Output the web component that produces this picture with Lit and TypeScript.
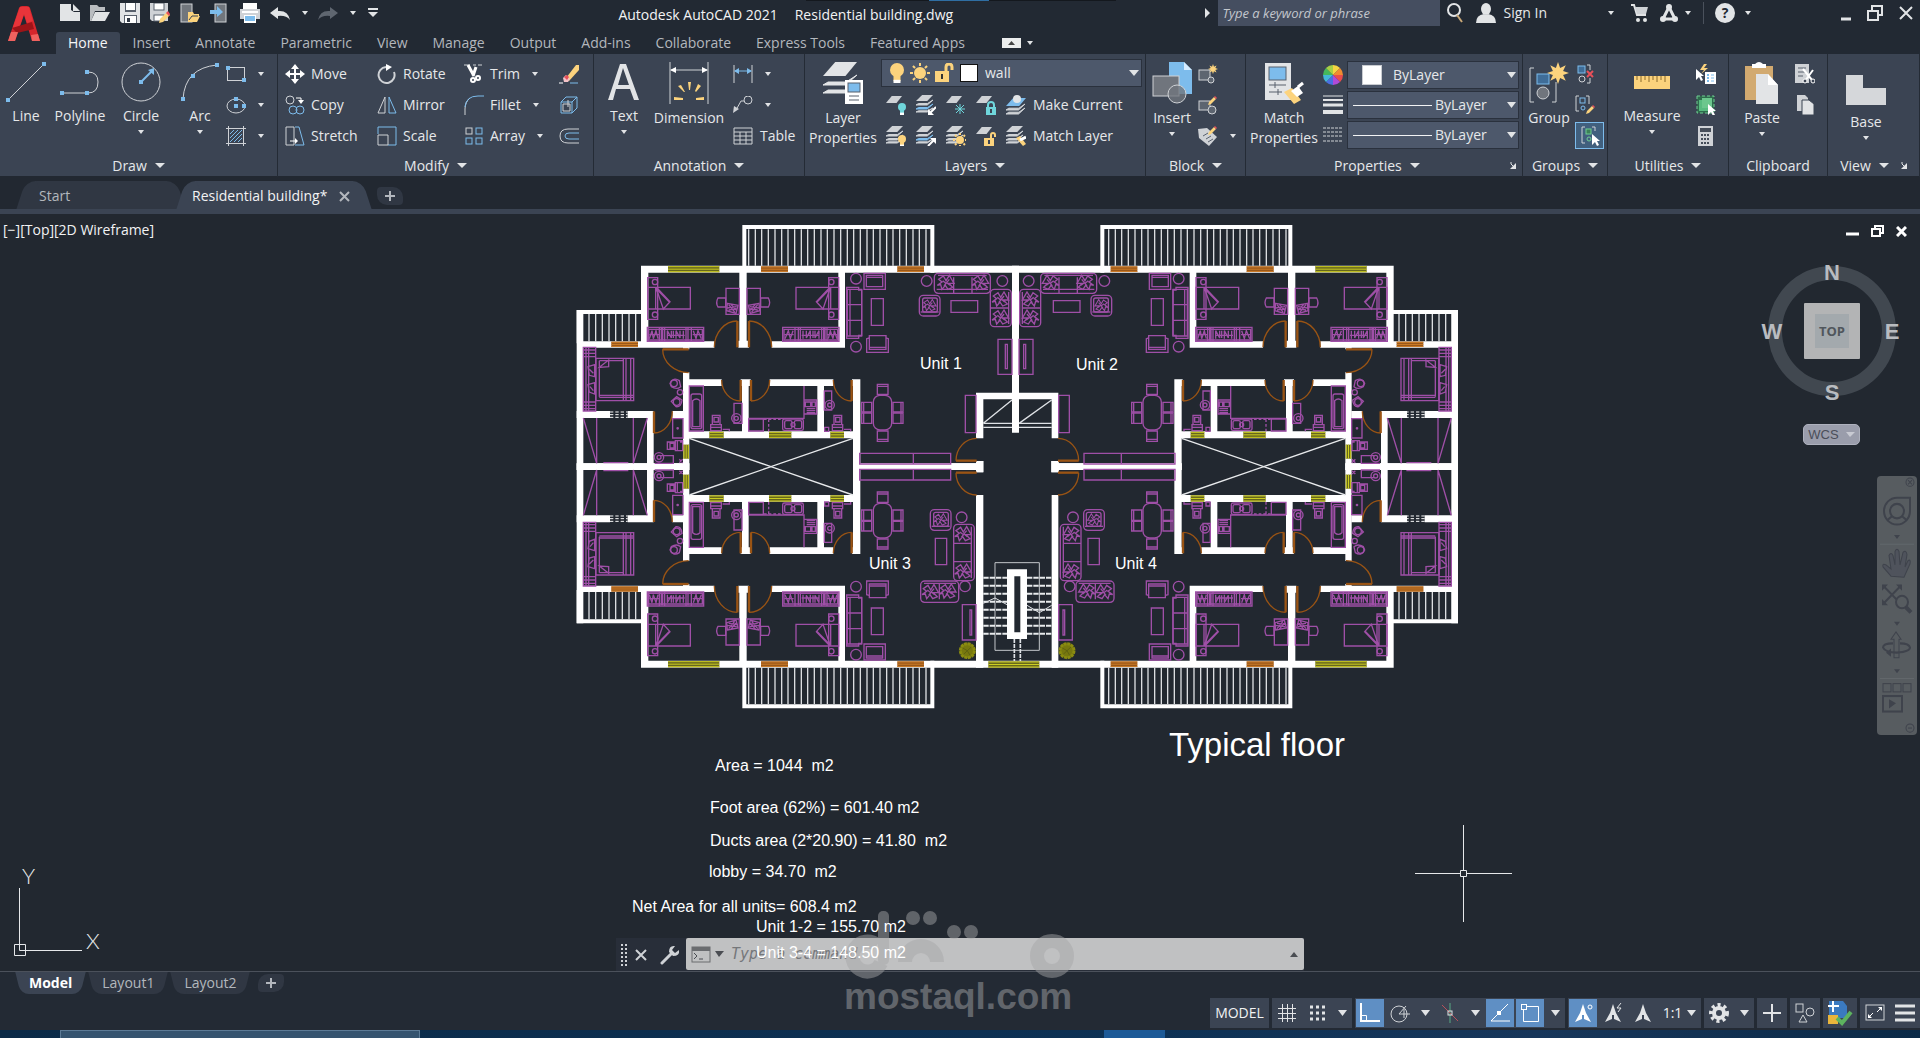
import { LitElement, html, svg, css, TemplateResult, SVGTemplateResult } from "lit";
import { customElement, state } from "lit/decorators.js";
import { classMap } from "lit/directives/class-map.js";

const W = "#e2e4e6";
const G = "#cfd2d6";
const B = "#7dbcec";
const Y = "#fcd37d";
const T = "#6fd6dc";
const R = "#e8505a";

const ico = (w: number, h: number, body: SVGTemplateResult) =>
  html`<svg class="ico" width=${w} height=${h} viewBox="0 0 ${w} ${h}" fill="none" aria-hidden="true">${body}</svg>`;

const caret = (w = 8, h = 5) => ico(w, h, svg`<path d="M0 0H${w}L${w / 2} ${h}Z" fill=${W}/>`);

const dot = (x: number, y: number) => svg`<rect x=${x - 2} y=${y - 2} width="4" height="4" fill=${B}/>`;
const sheet = (x: number, y: number, w: number, h: number, fill: string) =>
  svg`<path d="M${x + w * 0.36} ${y}H${x + w}L${x + w * 0.66} ${y + h}H${x}Z" fill=${fill}/>`;
const edge = (x: number, y: number, w: number, h: number, fill: string) =>
  svg`<path d="M${x} ${y + h}L${x + w * 0.15} ${y + h * 0.7}H${x + w * 0.68}L${x + w} ${y}L${x + w * 0.66} ${y + h}Z" fill=${fill} stroke=${fill}/>`;
const stack = (mid = G) => svg`${sheet(0, 0, 17, 6, G)}${edge(0, 5, 17, 5, G)}${edge(0, 9, 17, 5, mid)}${edge(0, 13, 17, 4, G)}`;
const pointer = (x: number, y: number) =>
  svg`<path d="M${x} ${y}L${x} ${y + 11}L${x + 3} ${y + 8}L${x + 5} ${y + 12}L${x + 7} ${y + 11}L${x + 5} ${y + 7}L${x + 8} ${y + 7}Z" fill="#fff"/>`;
const pencil = (x: number, y: number) =>
  svg`<path d="M${x} ${y + 9}L${x + 1} ${y + 6}L${x + 6} ${y + 1}L${x + 8} ${y + 3}L${x + 3} ${y + 8}Z" fill=${Y}/><path d="M${x + 6} ${y + 1}L${x + 7} ${y}L${x + 9} ${y + 2}L${x + 8} ${y + 3}Z" fill=${R}/>`;
const bulb = (x: number, y: number, c: string, r = 4) =>
  svg`<circle cx=${x} cy=${y} r=${r} fill=${c}/><path d="M${x - r * 0.5} ${y + r * 0.6}h${r}v${r}h${-r}z" fill=${c}/><path d="M${x - r * 0.5} ${y + r * 1.4}h${r}v${r * 0.6}h${-r}z" fill="#fff"/>`;
const sun = (x: number, y: number, r: number, o: number) => svg`<circle cx=${x} cy=${y} r=${r} fill=${Y}/>
  ${[0, 1, 2, 3, 4, 5, 6, 7].map((i) => {
    const a = (i * Math.PI) / 4;
    const c = Math.cos(a), s = Math.sin(a);
    return svg`<path d="M${x + c * (r + 1)} ${y + s * (r + 1)}L${x + c * o} ${y + s * o}" stroke=${Y} stroke-width="2"/>`;
  })}`;
const padlock = (x: number, y: number, c: string, open: boolean) =>
  svg`<rect x=${x} y=${y + 5} width="10" height="8" fill=${c}/><path d=${open ? `M${x + 7} ${y + 5}V${y + 2}q0 -2 2 -2t2 2v2` : `M${x + 2} ${y + 5}V${y + 3}q0 -3 3 -3t3 3v2`} stroke=${c} stroke-width="2"/><path d="M${x + 5} ${y + 7}v4" stroke="#3b4453" stroke-width="2"/>`;
const burst = (x: number, y: number, r: number) => {
  let d = "";
  for (let i = 0; i < 16; i++) {
    const a = (i * Math.PI) / 8, q = i % 2 ? r * 0.5 : r;
    d += `${i ? "L" : "M"}${x + q * Math.cos(a)} ${y + q * Math.sin(a)}`;
  }
  return svg`<path d=${d + "Z"} fill=${Y}/>`;
};

const icons = {
  logo: ico(34, 38, svg`
    <path d="M1 36L12 3Q13 1 15 1H20Q22 1 23 3L33 36H25L17 10L8 36Z" fill="#d5262c"/>
    <path d="M13 2L22 2L26 16L20 18L17 9L11 26L6 22Z" fill="#e8343a"/>
    <path d="M5 23L25 17L27 24L10 28Z" fill="#9d1418"/><path d="M1 36L4 27L11 27L8 36ZM24 30L31 29L33 36H25Z" fill="#f0625f"/>`),
  neu: ico(20, 18, svg`<path d="M0 0H11V6L14 8H20V17H0Z" fill=${W}/><path d="M13 0L20 7H13Z" fill=${W}/>`),
  open: ico(20, 18, svg`<path d="M0 17V1H7L9 3H15V7H5L1 17Z" fill="#b9bcc0"/><path d="M5 8H20L15 17H1Z" fill=${W}/>`),
  save: ico(20, 20, svg`<path d="M0 0H20V20H2L0 18Z" fill=${W}/><rect x="5" y="0" width="11" height="9" fill="#59616d"/><rect x="6" width="9" height="7" fill="#fff"/><rect x="4" y="12" width="13" height="8" fill="#59616d"/><rect x="5" y="13" width="11" height="7" fill="#fff"/><rect x="7" y="15" width="3" height="4" fill="#333b47"/>`),
  saveAs: ico(20, 20, svg`<path d="M0 0H18V18H2L0 16Z" fill=${G}/><rect x="4" width="10" height="7" fill="#fff" stroke="#59616d"/><rect x="4" y="12" width="10" height="6" fill="#fff" stroke="#59616d"/><path d="M9 20L10 16L17 9L20 12L13 19Z" fill=${Y}/><path d="M16 10L18 8L20 11L19 13Z" fill=${R}/>`),
  mobOpen: ico(20, 20, svg`<rect x="1" y="1" width="11" height="18" fill="#71767d" stroke=${G}/><path d="M8 19V9H13L14 11H19V13L20 13L17 19Z" fill=${Y}/><path d="M9 17L12 13H18" stroke="#3b4453"/>`),
  mobSave: ico(20, 20, svg`<rect x="5" y="1" width="11" height="18" fill="#71767d" stroke=${G}/><path d="M0 7H7V3L13 9L7 14V11H0Z" fill=${B}/>`),
  print: ico(20, 20, svg`<rect x="3" width="14" height="6" fill="#fff"/><rect y="6" width="20" height="10" fill=${G}/><rect x="2" y="8" width="16" height="2" fill="#fff"/><rect x="4" y="12" width="12" height="8" fill="#fff"/><rect x="5" y="13" width="10" height="5" fill=${B}/>`),
  undo: ico(20, 13, svg`<path d="M0 6L8 0V4Q18 3 20 13Q16 8 8 9V12Z" fill=${W}/>`),
  redo: ico(20, 13, svg`<path d="M20 6L12 0V4Q2 3 0 13Q4 8 12 9V12Z" fill="#5f6670"/>`),
  qat: ico(10, 10, svg`<path d="M0 1H10" stroke=${W} stroke-width="2"/><path d="M0 4H10L5 9Z" fill=${W}/>`),
  search: ico(16, 20, svg`<circle cx="7" cy="7" r="6" stroke=${W} stroke-width="2"/><path d="M10 12L15 19" stroke="#c9a878" stroke-width="2"/>`),
  person: ico(20, 20, svg`<ellipse cx="10" cy="6" rx="5" ry="6" fill=${W}/><path d="M0 20Q0 12 8 11L10 12L12 11Q20 12 20 20Z" fill=${W}/>`),
  cart: ico(17, 18, svg`<path d="M0 1H3L6 11H15" stroke=${W} stroke-width="2"/><path d="M4 3H17L15 10H6Z" fill=${G}/><circle cx="7" cy="16" r="2" fill=${W}/><circle cx="14" cy="16" r="2" fill=${W}/>`),
  appA: ico(18, 18, svg`<path d="M9 3L3 15H15Z" stroke=${W} stroke-width="3"/><circle cx="9" cy="3" r="3" fill=${W}/><circle cx="3" cy="15" r="3" fill=${W}/><circle cx="15" cy="15" r="3" fill=${W}/>`),
  line: ico(40, 40, svg`<path d="M3 37L37 3" stroke=${G}/>${dot(2, 38)}${dot(38, 2)}`),
  pline: ico(40, 40, svg`<path d="M2 31H28Q38 31 38 20Q38 10 28 10" stroke=${G}/>${dot(2, 31)}${dot(27, 31)}${dot(27, 10)}`),
  circle: ico(40, 40, svg`<circle cx="20" cy="20" r="19" stroke=${G}/><path d="M20 20L31 9" stroke=${B} stroke-width="2"/><path d="M33 6V13L27 8Z" fill=${B}/>${dot(20, 20)}`),
  arc: ico(40, 40, svg`<path d="M3 37Q5 6 37 3" stroke=${G}/>${dot(3, 37)}${dot(13, 14)}${dot(37, 3)}`),
  rect: ico(20, 18, svg`<rect x="1.5" y="2.5" width="17" height="13" stroke=${G}/>${dot(2, 3)}${dot(18, 15)}`),
  ellipse: ico(20, 18, svg`<ellipse cx="10" cy="10" rx="9" ry="7" stroke=${G}/>${dot(10, 3)}${dot(18, 10)}${dot(10, 10)}`),
  hatch: ico(20, 20, svg`<path d="M2.500 0V20M17.500 0V20M0 2.500H20M0 17.500H20" stroke=${G}/><path d="M4 8L8 4M4 12L12 4M4 16L16 4M8 16L16 8M12 16L16 12" stroke=${B}/>`),
  move: ico(20, 20, svg`<path d="M10 2V18M2 10H18" stroke="#fff" stroke-width="2"/><path d="M10 0L14 5H6ZM10 20L14 15H6ZM0 10L5 6V14ZM20 10L15 6V14Z" fill="#fff"/>`),
  copy: ico(20, 20, svg`<circle cx="5" cy="5" r="4" stroke=${G}/><circle cx="8" cy="15" r="4" stroke=${B}/><circle cx="15" cy="15" r="4" stroke=${B}/><path d="M11 3H16V6" stroke="#fff"/><path d="M13 5H19L16 9Z" fill="#fff"/>`),
  stretch: ico(20, 20, svg`<path d="M1 1H9V19H1Z" stroke=${G}/><path d="M10 1H14L19 19H10" stroke=${B}/><path d="M5 15H11" stroke="#fff"/><path d="M10 12V18L13 15Z" fill="#fff"/>`),
  rotate: ico(20, 20, svg`<path d="M9 3A8 8 0 1 0 17 8" stroke=${G} stroke-width="2"/><path d="M9 0L15 3L9 7Z" fill="#fff"/>`),
  mirror: ico(20, 20, svg`<path d="M8 2V18H1Z" stroke=${G}/><path d="M12 2V18H19Z" stroke=${B}/>`),
  scale: ico(20, 20, svg`<path d="M1 8V1H19V19H11" stroke=${B}/><path d="M1 9H11V19H1Z" stroke=${G}/>`),
  trim: ico(20, 20, svg`<path d="M0 1H6M9 1H12M14 1H18" stroke=${G}/><path d="M4 1L10 12M12 3L9 12" stroke="#fff" stroke-width="3"/><circle cx="9" cy="16" r="2" stroke="#fff" stroke-width="2"/><circle cx="14" cy="14" r="2" stroke="#fff" stroke-width="2"/>`),
  fillet: ico(20, 20, svg`<path d="M1 20V14Q1 7 6 3" stroke=${G}/><path d="M1 12Q2 1 14 1H20" stroke=${B}/>`),
  array: ico(20, 20, svg`<rect x="2" y="2" width="6" height="6" stroke=${G}/><rect x="12" y="2" width="6" height="6" stroke=${B}/><rect x="2" y="12" width="6" height="6" stroke=${B}/><rect x="12" y="12" width="6" height="6" stroke=${B}/>`),
  erase: ico(20, 20, svg`<path d="M7 14L17 1H20V6L10 17Z" fill=${Y}/><path d="M4 14L7 11L11 15L9 18H5Z" fill="#f3c3c8"/><path d="M5 13L8 11L10 13L8 16Z" fill=${R}/><path d="M0 19H4" stroke="#fff"/><path d="M11 19H19" stroke=${B}/>`),
  explode: ico(20, 20, svg`<path d="M2 7H13V18H2ZM2 7L7 2H18L13 7M18 2V13L13 18" stroke=${B}/><path d="M4 9H11V16H4ZM9 5V12" stroke=${G}/>`),
  offset: ico(20, 16, svg`<path d="M20 1H9Q1 1 1 8T9 15H20" stroke=${G}/><path d="M20 5H10Q6 5 6 8T10 11H20" stroke=${B}/>`),
  text: ico(36, 40, svg`<path d="M2 38L14 2H20L33 38H28L24 27H10L7 38ZM12 23H23L17 6Z" fill=${W} fill-rule="evenodd"/>`),
  dim: ico(40, 42, svg`<path d="M1 0V42M39 0V42M2 8H38" stroke=${G}/><path d="M1 8L7 5V11ZM39 8L33 5V11Z" fill="#fff"/><path d="M19 20h3l-1 8h-1zM9 24l3-1l4 7h-1zM29 22l3 2l-5 6l-1-1zM5 35l9 1v2H5zM35 35v3h-8v-2z" fill=${Y}/>`),
  dimLin: ico(20, 18, svg`<path d="M1 0V18M19 0V18" stroke=${G}/><path d="M2 6H18" stroke=${B}/><path d="M1 6L6 3V9ZM19 6L14 3V9Z" fill=${B}/>`),
  leader: ico(20, 18, svg`<circle cx="15" cy="4" r="4" stroke=${G}/><path d="M11 5H8L3 14" stroke=${G}/><path d="M0 17L1 10L6 13Z" fill=${G}/>`),
  table: ico(20, 18, svg`<path d="M1 1H19V17H1ZM1 5H19M1 9H19M1 13H19M7 5V17M13 5V17" stroke=${G}/>`),
  layerProps: ico(40, 42, svg`${sheet(0, 0, 34, 14, W)}${edge(0, 13, 34, 10, W)}${edge(0, 21, 34, 10, W)}<rect x="22" y="18" width="18" height="24" fill="#fff"/><rect x="25" y="21" width="12" height="9" fill=${B} stroke="#59616d"/><path d="M26 34H36M26 38H36" stroke="#59616d"/>`),
  bulb: ico(16, 20, svg`${bulb(8, 7, Y, 7)}`),
  sun: ico(20, 20, sun(10, 10, 6, 10)),
  lock: ico(20, 20, svg`<rect y="8" width="14" height="11" fill=${Y}/><path d="M11 8V4Q11 1 14 1T17 4V7" stroke=${Y} stroke-width="3"/><path d="M7 11V16" stroke="#333" stroke-width="2"/>`),
  lOff: ico(20, 20, svg`${sheet(0, 1, 16, 7, G)}${bulb(16, 12, T, 4)}`),
  lIso: ico(20, 20, svg`${stack(B)}<path d="M20 12L14 18" stroke="#fff" stroke-width="2"/><path d="M12 20V14L18 20Z" fill="#fff"/>`),
  lFrz: ico(20, 20, svg`${sheet(0, 1, 16, 7, G)}<path d="M14 9V19M9 14H19M10 10L18 18M18 10L10 18" stroke=${T} stroke-width="1"/>`),
  lLock: ico(20, 20, svg`${sheet(0, 1, 16, 7, G)}${padlock(10, 7, T, false)}`),
  lCur: ico(20, 20, svg`${sheet(0, 3, 20, 8, B)}${edge(0, 9, 19, 6, G)}${edge(0, 13, 19, 6, G)}<circle cx="11" cy="4" r="4" fill=${W}/>`),
  lOn: ico(20, 20, svg`${stack()}${bulb(16, 13, Y, 4)}`),
  lUniso: ico(20, 20, svg`${stack(B)}<path d="M12 20L18 14" stroke="#fff" stroke-width="2"/><path d="M20 12V18L14 12Z" fill="#fff"/>`),
  lThaw: ico(20, 20, svg`${stack()}${sun(14, 14, 4, 7)}`),
  lUnlock: ico(20, 20, svg`${sheet(0, 1, 16, 7, G)}${padlock(8, 7, Y, true)}`),
  lMatch: ico(20, 20, svg`${stack()}<path d="M10 12L14 10L20 18L17 20Z" fill=${Y}/><path d="M14 14L20 11" stroke="#fff" stroke-width="3"/>`),
  insert: ico(40, 42, svg`<path d="M17 0H32L40 8V32H17Z" fill=${B}/><path d="M32 0V8H40Z" fill="#d6ecff"/><rect x="1" y="14" width="26" height="20" fill="#70757d" stroke=${G}/><circle cx="25" cy="32" r="9" fill="#70757d" fill-opacity=".8" stroke=${G}/>`),
  bNew: ico(20, 20, svg`<rect x="1" y="6" width="11" height="10" fill="#5d6570" stroke=${G}/><circle cx="13" cy="16" r="3" fill="#5d6570" stroke=${G}/>${burst(15, 5, 5)}`),
  bEdit: ico(20, 20, svg`<rect x="1" y="6" width="11" height="9" fill="#5d6570" stroke=${G}/><circle cx="14" cy="15" r="4" fill="#5d6570" stroke=${G}/>${pencil(10, 1)}`),
  bAttr: ico(20, 20, svg`<path d="M0 3L9 2L19 11L11 20L1 12Z" fill=${G}/><path d="M5 10L10 7M8 13L13 10M10 16L15 13" stroke="#59616d"/>${pencil(10, 0)}`),
  match: ico(40, 42, svg`<rect x="1" y="1" width="26" height="37" fill=${W}/><rect x="5" y="5" width="17" height="13" fill=${B} stroke="#59616d"/><path d="M5 23H22M5 30H18M11 20V26M14 27V33" stroke="#59616d"/><path d="M20 30L28 26L37 38L30 42Z" fill=${Y}/><path d="M27 29L34 24L39 31L33 35Z" fill="#fff"/><path d="M34 25L39 21" stroke="#fff" stroke-width="3"/>`),
  wheel: ico(20, 20, svg`${["#f5d442", "#f28b30", "#ea4c4c", "#b14ad8", "#4a6fe0", "#43b8d8", "#45b95c", "#a6cf45"].map((c, i) => {
    const a = (i * Math.PI) / 4, b = ((i + 1) * Math.PI) / 4;
    return svg`<path d="M10 10L${10 + 10 * Math.sin(a)} ${10 - 10 * Math.cos(a)}A10 10 0 0 1 ${10 + 10 * Math.sin(b)} ${10 - 10 * Math.cos(b)}Z" fill=${c}/>`;
  })}`),
  weights: ico(20, 20, svg`<path d="M0 1H20" stroke=${W}/><path d="M0 5H20" stroke=${W} stroke-width="2"/><path d="M0 10H20" stroke=${W} stroke-width="3"/><path d="M0 17H20" stroke=${W} stroke-width="4"/>`),
  ltypes: ico(20, 16, svg`<path d="M0 1H20M0 5H20M0 9H20M0 14H20" stroke=${G} stroke-dasharray="3 1"/>`),
  group: ico(40, 42, svg`<path d="M5 6H1V40H5M23 40H27V20" stroke=${G}/><rect x="8" y="12" width="12" height="10" fill="#3f6d98" stroke=${B}/><circle cx="14" cy="31" r="6" fill="#70757d" stroke=${G}/>${burst(29, 11, 11)}`),
  ungroup: ico(20, 20, svg`<rect x="3" y="2" width="7" height="7" fill="#3f6d98" stroke=${B}/><circle cx="7" cy="15" r="3" stroke=${G}/><path d="M12 1H15V6M12 19H15V14" stroke=${G}/><path d="M12 7L18 13M18 7L12 13" stroke=${R} stroke-width="2"/>`),
  gEdit: ico(20, 20, svg`<path d="M4 1H1V16H4M11 1H14V9" stroke=${G}/><rect x="5" y="3" width="5" height="5" stroke=${B}/><circle cx="8" cy="13" r="2" stroke=${B}/>${pencil(11, 10)}`),
  gSel: ico(20, 20, svg`<path d="M5 1H2V17H5M12 1H15V5" stroke=${G}/><rect x="6" y="3" width="5" height="5" fill="#3c8058" stroke="#6fce92"/><circle cx="9" cy="13" r="2" stroke="#6fce92"/>${pointer(12, 8)}`),
  measure: ico(36, 40, svg`<rect y="14" width="36" height="13" fill=${Y}/><path d="M3 14V18M7 14V20M11 14V18M15 14V20M19 14V18M23 14V20M27 14V18M31 14V20" stroke="#8a6a2c"/>`),
  qsel: ico(20, 20, svg`<path d="M8 0L4 6H8L5 10L12 4H8L11 0Z" fill=${Y}/><rect x="9" y="8" width="11" height="12" fill="#fff"/><path d="M11 11H13M11 14H13M11 17H13" stroke=${B} stroke-width="2"/><path d="M15 11H18M15 14H18M15 17H18" stroke=${B}/>${pointer(0, 5)}`),
  selAll: ico(20, 20, svg`<rect x="1" y="1" width="17" height="17" fill="#2e6b4c" stroke="#6fce92" stroke-dasharray="3 2"/><rect x="3" y="5" width="10" height="11" fill="#58bb7f"/><rect x="6" y="3" width="10" height="10" fill="#6cc78d"/>${pointer(12, 9)}`),
  calc: ico(20, 20, svg`<rect x="2" width="15" height="20" fill=${G}/><rect x="4" y="2" width="11" height="4" fill="#454d59"/><path d="M5 9H14M5 13H14M5 17H14" stroke="#454d59" stroke-width="2" stroke-dasharray="2 1"/>`),
  paste: ico(34, 42, svg`<rect y="4" width="28" height="34" fill="#d2aa70"/><path d="M7 6V2H10Q14 -2 18 2H21V6Z" fill="#fff"/><path d="M11 12H23L33 23V42H11Z" fill=${W}/><path d="M23 12V23H33Z" fill="#fff"/>`),
  cut: ico(20, 20, svg`<path d="M0 0H14V19H0Z" fill=${G}/><path d="M3 4H11M3 8H11M3 12H8" stroke="#59616d"/><path d="M8 5L17 16M18 6L10 17" stroke="#fff" stroke-width="2"/><circle cx="10" cy="17" r="2" fill="#3b4453" stroke="#fff"/><circle cx="18" cy="17" r="2" fill="#3b4453" stroke="#fff"/>`),
  copyClip: ico(20, 20, svg`<path d="M2 0H10L13 3V16H2Z" fill=${G}/><path d="M7 5H14L19 9V20H7Z" fill=${W} stroke="#3b4453"/>`),
  base: ico(40, 46, svg`<path d="M0 13H17V26H40V43H0Z" fill="#d5d7da"/>`),
  launch: ico(6, 7, svg`<path d="M0 1H2M1 2L4 5" stroke=${W}/><path d="M6 1V7H0Z" fill=${W}/>`),
};

/* ---------- Floor plan: drawn at three units to the pixel ---------- */
const P = "#9f4fa7";
const O = "#9a5414";
const r = (x: number, y: number, x2: number, y2: number) => svg`<path d="M${x} ${y}H${x2}V${y2}H${x}Z"/>`;
const c = (x: number, y: number, rad: number) => svg`<circle cx=${x} cy=${y} r=${rad}/>`;
const door = (hx: number, hy: number, tx: number, ty: number, ex: number, ey: number) => {
  const sweep = (tx - hx) * (ey - hy) - (ty - hy) * (ex - hx) > 0 ? 1 : 0;
  const rx = Math.abs(tx - hx) + Math.abs(ex - hx), ry = Math.abs(ty - hy) + Math.abs(ey - hy);
  return svg`<path d="M${hx} ${hy}L${tx} ${ty}" stroke-width="7"/><path d="M${tx} ${ty}A${rx} ${ry} 0 0 ${sweep} ${ex} ${ey}"/>`;
};
const bars = (x0: number, x1: number, y0: number, y1: number, step: number) => {
  let d = "";
  for (let x = x0; x < x1; x += step) d += `M${Math.round(x)} ${y0}V${y1}`;
  return svg`<path d=${d} stroke="#dcdee1" stroke-width="4"/>`;
};
const pane = (x: number, y: number, x2: number, y2: number, col: string, back: string) => {
  const flat = x2 - x > y2 - y;
  const m = flat ? (y + y2) / 2 : (x + x2) / 2;
  const d = flat
    ? `M${x} ${y + 2}H${x2}M${x} ${m}H${x2}M${x} ${y2 - 2}H${x2}`
    : `M${x + 2} ${y}V${y2}M${m} ${y}V${y2}M${x2 - 2} ${y}V${y2}`;
  return svg`<rect x=${x} y=${y} width=${x2 - x} height=${y2 - y} fill=${back}/><path d=${d} stroke=${col} stroke-width="3"/>`;
};
const yel = (x: number, y: number, x2: number, y2: number) => pane(x, y, x2, y2, "#cfcf22", "#66671d");
const ora = (x: number, y: number, x2: number, y2: number) => pane(x, y, x2, y2, "#d5822a", "#8f5016");
const leaf = (x: number, y: number, s = 1) =>
  svg`<path transform="translate(${x} ${y}) scale(${s})" d="M-22 -10L-8 -20L0 -6L10 -22L18 -8L24 2L8 2L20 14L6 20L-2 8L-12 20L-16 6L-26 8L-12 -2ZM-10 -6L0 2L10 -10M-6 10L2 0L12 8"/>`;
const armchair = (x: number, y: number) =>
  svg`<rect x=${x} y=${y} width="62" height="62" rx="12"/><rect x=${x + 10} y=${y + 8} width="44" height="42" rx="6"/><path d="M${x + 4} ${y + 50}H${x + 58}"/>${leaf(x + 31, y + 30, 0.8)}`;

const suite = () => svg`
  ${r(263, 203, 293, 328)}${r(263, 232, 391, 297)}<path d="M287 232V297M289 232L330 275L310 297L289 236L330 278"/>${c(285, 216, 8)}${c(285, 314, 8)}
  ${r(498, 235, 538, 313)}<path d="M497 264H474Q466 278 474 291H497Z"/><path d="M502 280L534 286L528 310L500 302ZM506 284L524 306M512 282L530 302M502 294L530 290M506 300L534 296"/>
  ${r(262, 352, 431, 394)}${r(266, 358, 427, 390)}<path d="M298 352V394M314 352V394M378 352V394M394 352V394M304 354V392M308 354V392M384 354V392M268 386L276 362L280 386L288 362L294 386M322 386V362L334 384V362M340 384V362M348 386V362L360 384V362M370 386V362M400 362L408 386L414 362L424 386M268 374H296M320 376H374M398 374H426"/>`;

const walls = () => svg`
  <path d="M553 188V51H1117V188" stroke="#fff" stroke-width="12"/>
  <path d="M56 400V306H248" stroke="#fff" stroke-width="12"/>
  ${bars(566, 1110, 58, 167, 19.7)}${bars(67, 243, 312, 394, 20)}
  <g fill="#fff">
    <path d="M243 167H1372V188H243ZM243 167H265V412H243ZM50 300H70V770H50ZM50 394H463V413H50ZM538 167H560V413H538ZM535 392H567V413H535ZM635 394H855V413H635ZM835 188H855V413H835Z"/>
    <path d="M369 487H388V770H369ZM388 508H485V528H388ZM542 508H572V528H542ZM546 508H566V664H546ZM629 508H820V528H629ZM772 508H792V664H772ZM876 508H901V528H876ZM879 508H901V770H879ZM369 664H901V685H369Z"/>
    <path d="M50 603H150V624H50ZM203 603H280V624H203ZM337 603H370V624H337ZM261 603H281V770H261ZM50 760H388V780H50ZM879 760H1270V780H879ZM1248 753H1270V787H1248ZM369 412H388V418H369Z"/>
  </g>
  <path d="M150 606H203M150 614H203M150 622H203" stroke="#fff" stroke-width="3" stroke-dasharray="10 6"/>
  <path d="M388 685L633 770L879 685" stroke="#e8eaec" stroke-width="4"/>
  ${yel(324, 168, 478, 187)}${yel(448, 665, 491, 684)}${yel(627, 665, 694, 684)}${yel(811, 665, 852, 684)}${yel(370, 704, 387, 746)}
  ${ora(603, 169, 684, 186)}${ora(1012, 169, 1092, 186)}${ora(154, 395, 234, 411)}`;

const fittings = () => svg`
  <g stroke=${P} stroke-width="4">
    ${suite()}<g transform="translate(1099 0) scale(-1 1)">${suite()}</g>
    ${r(70, 412, 107, 603)}<path d="M78 412V603M86 412V603M70 420H107M70 430H107M70 440H107M70 576H107M70 586H107M70 596H107M107 445V572M84 470L104 464V500L88 496ZM84 524L104 518V552L88 546ZM88 478L100 490M90 530L100 542"/>
    ${r(107, 445, 221, 572)}<path d="M118 452V560M118 452H190M118 556H221M118 562H221M190 445V572M198 445V572M212 445V572M118 472L146 450V470Z"/>
    <path d="M330 520Q340 500 358 512L362 530Q350 540 334 530ZM334 574L350 560L366 570Q364 592 348 590Z"/>${c(342, 520, 10)}${c(360, 547, 8)}${c(350, 576, 10)}
    <path d="M110 624V760M220 624V760M70 624L110 760M262 624L220 760M130 758H205"/>
    ${r(338, 626, 369, 684)}${c(353, 655, 2)}<path d="M322 696H346V718H322ZM330 700H342V714H330ZM346 692H368V722H346ZM352 692V722M360 696H368M358 748L368 758M358 758L368 748"/>
    <path d="M300 737H340V760H284"/>${c(297, 742, 14)}${c(297, 742, 6)}
    ${r(388, 528, 430, 663)}<rect x="393" y="552" width="32" height="104" rx="6"/><path d="M398 572Q409 562 420 572V650H398Z"/>
    ${r(522, 580, 546, 640)}${c(529, 625, 14)}${c(529, 625, 6)}
    <path d="M457 616H480V644H457ZM462 622H475V636H462ZM452 644H484V662H452ZM452 652H484M488 658H508V664"/>
    <path d="M732 528V625H566M566 627H610V663H566ZM732 570H770V612H732ZM736 576H752V590H736ZM740 596H766M740 602H766M740 608H766M756 576H766V590H756Z"/>
    <path d="M626 628V664M612 628H666" stroke-dasharray="8 6"/><rect x="668" y="627" width="62" height="34" rx="5"/><rect x="674" y="632" width="22" height="24" rx="5"/><rect x="703" y="632" width="22" height="24" rx="5"/>${c(699, 644, 6)}
    ${r(793, 543, 815, 600)}${c(809, 585, 14)}${c(809, 585, 6)}
    <path d="M822 616H845V644H822ZM827 622H840V636H827ZM817 644H848V662H817ZM817 652H848M852 658H872V664M794 652H806V664H794Z"/>
    <rect x="940" y="556" width="55" height="104" rx="20"/>${r(952, 523, 984, 553)}${r(952, 663, 984, 694)}${r(905, 577, 935, 606)}${r(905, 609, 935, 640)}${r(999, 577, 1029, 606)}${r(999, 609, 1029, 640)}<path d="M952 529H984M952 688H984M911 577V640M1023 577V640"/>
    ${r(899, 730, 1172, 762)}<path d="M1060 730V762"/>
    ${c(888, 206, 16)}${r(912, 190, 976, 238)}${r(919, 196, 968, 230)}<path d="M919 202H968M860 232H896V240H905V376H896V385H860Z"/>${r(862, 238, 905, 378)}<path d="M862 284H905M862 331H905M870 238V378"/>${r(934, 266, 970, 346)}
    ${r(928, 377, 978, 418)}<path d="M928 384L920 386V427H985V386L978 384M928 412H978"/>${c(888, 410, 16)}
  </g>
  <g stroke=${O} stroke-width="4">
    ${door(532, 412, 532, 333, 463, 412)}${door(567, 412, 567, 333, 635, 412)}${door(386, 418, 308, 418, 386, 488)}
    ${door(542, 510, 542, 573, 485, 510)}${door(573, 510, 573, 573, 629, 510)}${door(875, 510, 875, 573, 820, 510)}
    ${door(282, 604, 282, 669, 337, 604)}${door(1250, 752, 1188, 752, 1250, 685)}
  </g>`;

const loungeNorth = () => svg`
  ${c(1100, 213, 16)}${c(1327, 213, 16)}
  <rect x="1123" y="190" width="168" height="60" rx="12"/><path d="M1134 196H1280M1181 202V250M1236 202V250M1130 238H1284"/>${leaf(1158, 218)}${leaf(1262, 218)}
  ${armchair(1078, 256)}${r(1173, 272, 1253, 307)}
  <rect x="1291" y="238" width="63" height="112" rx="12"/><path d="M1346 246V342M1291 294H1346"/>${leaf(1322, 268)}${leaf(1322, 322)}
  ${r(1314, 388, 1356, 493)}${r(1336, 403, 1342, 476)}`;

const loungeSouth = () => svg`
  ${c(1205, 922, 16)}${c(1215, 1129, 16)}${armchair(1111, 899)}${r(1126, 985, 1160, 1064)}
  <rect x="1181" y="943" width="62" height="169" rx="12"/><path d="M1234 950V1104M1181 1000H1234M1181 1055H1234"/>${leaf(1210, 972)}${leaf(1210, 1084)}
  <rect x="1082" y="1113" width="114" height="64" rx="12"/><path d="M1092 1120H1188M1138 1120V1168"/>${leaf(1112, 1146)}${leaf(1164, 1144)}
  ${r(1207, 1184, 1248, 1290)}${r(1230, 1200, 1235, 1275)}${r(1216, 556, 1248, 668)}`;

const plant = (x: number, y: number) => svg`<circle cx=${x} cy=${y} r="22" fill="#77780f"/><circle cx=${x} cy=${y} r="21" stroke="#8b8c10" stroke-width="9" stroke-dasharray="9 2"/>
  <path d="M${x} ${y}l-14 -8M${x} ${y}l12 -11M${x} ${y}l8 14M${x} ${y}l-11 11" stroke="#55570f" stroke-width="2"/>`;

const quadrants = ["", "translate(2744 0) scale(-1 1)", "translate(0 1540) scale(1 -1)", "translate(2744 1540) scale(-1 -1)"];

const stairs = () => {
  let d = "";
  for (let i = 0; i < 8; i++) d += `M1270 ${1103 + i * 24}H1341M1401 ${1103 + i * 24}H1475`;
  return svg`
    <path d="M1305 1058H1438V1321H1305Z" stroke="#c4c7cb" stroke-width="3"/>
    <path d=${d} stroke="#e8eaec" stroke-width="6" stroke-dasharray="16 3"/>
    <path d="M1270 1180L1305 1164L1341 1184M1401 1186L1438 1208L1475 1186" stroke="#dfe2e6" stroke-width="3"/>
    <path d="M1341 1078H1401V1287H1341ZM1363 1099V1267H1381V1099Z" fill="#fff" fill-rule="evenodd"/>
    <path d="M1363 1287V1353M1381 1287V1353" stroke="#dfe2e6" stroke-width="5" stroke-dasharray="12 3"/>
    ${yel(1285, 1354, 1438, 1373)}`;
};

const plan = () => svg`
  <g transform="translate(560 -4) scale(.333333)">
    ${quadrants.map((t) => svg`<g transform=${t}>${walls()}</g>`)}
    <path d="M1248 548H1495V568H1248ZM1248 548H1270V685H1248ZM1475 548H1495V685H1475ZM1356 167H1377V668H1356ZM1248 855H1270V1373H1248ZM1475 855H1495V1373H1475Z" fill="#fff"/>
    <path d="M1270 640H1356M1377 640H1475M1270 652H1356M1377 652H1475M1270 640L1356 570M1377 640L1475 570" stroke="#dfe2e6" stroke-width="4"/>
    ${stairs()}
    ${quadrants.map((t) => svg`<g transform=${t}>${fittings()}</g>`)}
    <g stroke=${P} stroke-width="4">
      ${loungeNorth()}<g transform="translate(2733 0) scale(-1 1)">${loungeNorth()}</g>
      ${loungeSouth()}<g transform="translate(2744 0) scale(-1 1)">${loungeSouth()}</g>
    </g>
    ${plant(1222, 1322)}${plant(1521, 1322)}
  </g>`;

const notes: [number, number, string][] = [
  [715, 771, "Area = 1044\u00a0 m2"],
  [710, 813, "Foot area (62%) = 601.40 m2"],
  [710, 846, "Ducts area (2*20.90) = 41.80\u00a0 m2"],
  [709, 877, "lobby = 34.70\u00a0 m2"],
  [632, 912, "Net Area for all units= 608.4 m2"],
  [920, 369, "Unit 1"],
  [1076, 370, "Unit 2"],
  [869, 569, "Unit 3"],
  [1115, 569, "Unit 4"],
];

type Cmd = [string, TemplateResult, boolean?];

@customElement("app-root")
export class AppRoot extends LitElement {
  @state() private ribbonTab = "Home";
  @state() private layout = "Model";

  static styles = css`
    :host { display: flex; flex-direction: column; position: relative; height: 100vh; overflow: hidden; background: #222831; color: #e6e8ea; font: 14px/20px "Open Sans", "Noto Sans", sans-serif; }
    * { box-sizing: border-box; }
    button, select, input { font: inherit; color: inherit; background: none; border: 0; padding: 0; margin: 0; border-radius: 0; }
    button { display: flex; align-items: center; justify-content: center; white-space: nowrap; }
    .ico { display: block; flex: none; }
    header { display: grid; grid-template-columns: 56px 1fr; grid-template-rows: 28px 26px; flex: none; background: #222933; }
    .logo { grid-row: 1 / 3; padding: 0 8px 6px 0; }
    .titlebar { display: grid; grid-template-columns: minmax(0, 559fr) auto minmax(0, 961fr); align-items: center; }
    .qat { display: flex; align-items: center; gap: 10px; padding: 0 0 2px 4px; }
    .qat .arrow { margin-left: 2px; }
    .qat .more { margin-left: 2px; }
    .doc { display: flex; gap: 17px; padding-top: 2px; margin: 0; font-weight: 400; font-size: 14px; color: #f2f3f4; white-space: nowrap; }
    .tools { display: flex; align-items: center; align-self: stretch; justify-content: flex-end; padding: 0 7px 2px 0; }
    .search { width: 222px; height: 26px; align-self: flex-start; margin: 0 7px 0 8px; padding: 0 4px; background: #454e60; font-style: italic; font-size: 13px; }
    .search::placeholder { color: #c3c7cd; opacity: 1; }
    .sign { gap: 7px; margin: 0 61px 0 13px; }
    .cartbtn { margin: 0 12px 0 17px; }
    .tools .appbtn { gap: 7px; padding-right: 12px; border-right: 1px solid #4a515c; height: 22px; }
    .help { gap: 10px; margin: 0 90px 0 11px; }
    .q { width: 20px; height: 20px; border-radius: 10px; background: #e2e4e6; color: #222933; font-weight: 700; line-height: 20px; }
    .wins { display: flex; align-items: center; gap: 16px; }
    .menu { display: flex; align-items: stretch; gap: 1px; padding-top: 4px; color: #b3b7bd; }
    .menu button { padding: 0 12px; border-radius: 3px 3px 0 0; }
    .menu button.on { background: #3b4453; color: #f5f6f7; }
    .menu .mini { margin-left: 24px; padding: 0; gap: 6px; }
    .ribbon { display: grid; grid-template-columns: 278fr 316fr 211fr 341fr 100fr 277fr 85fr 121fr 99fr 92fr; height: 122px; flex: none; background: #3b4453; }
    .panel { display: flex; flex-direction: column; min-width: 0; border-right: 1px solid #242b35; }
    .body { display: flex; flex: 1; padding-top: 4px; min-height: 0; }
    .panel h2 { display: flex; align-items: center; justify-content: center; gap: 8px; height: 26px; margin: 0; padding-top: 3px; font-size: 14px; font-weight: 400; }
    .panel h2 .launch { margin-left: 4px; }
    .panel h2.wide { padding-left: 88px; justify-content: space-between; padding-right: 6px; }
    .panel h2.wide .name { display: flex; gap: 8px; align-items: center; }
    .big { flex-direction: column; justify-content: flex-start; padding-top: 4px; line-height: 20px; flex: none; }
    .big .cap { margin-top: 4px; text-align: center; white-space: pre-line; line-height: 20px; }
    .big .arrow { margin-top: 4px; }
    .w52 { width: 52px; } .w56 { width: 56px; } .w60 { width: 60px; } .w66 { width: 66px; } .w70 { width: 70px; } .w76 { width: 76px; } .w88 { width: 88px; }
    .col { display: grid; grid-template-rows: repeat(3, 31px); align-items: center; justify-items: start; }
    .col button { gap: 7px; }
    .col .withcaret { gap: 12px; }
    .anno { padding-left: 9px; }
    .mod { display: grid; grid-template-columns: 92px 87px 95px 22px; grid-template-rows: repeat(3, 31px); padding-left: 7px; align-items: center; justify-items: start; }
    .mod button { gap: 6px; }
    .mod .arrow { margin-left: 6px; }
    .layers { display: flex; flex-direction: column; flex: 1; padding-right: 3px; }
    .combo { display: flex; align-items: center; height: 28px; border: 1px solid #2a313d; background: #4d586b; padding: 0 5px; min-width: 0; }
    .combo select { appearance: none; flex: 1; min-width: 0; height: 24px; outline: none; }
    .combo option { background: #4d586b; }
    .layers .combo { gap: 5px; margin-top: 1px; padding: 0 2px 0 7px; }
    .swatch { width: 18px; height: 18px; background: #fff; border: 1px solid #111; margin-right: 2px; flex: none; }
    .lrow { display: flex; align-items: center; gap: 10px; height: 31px; padding-left: 5px; }
    .lrow:nth-child(2) { margin-top: 2px; }
    .lrow .lbl { gap: 7px; }
    .props { display: grid; grid-template-columns: 20px minmax(0, 1fr); grid-template-rows: repeat(3, 30px); column-gap: 4px; flex: 1; align-items: center; padding: 2px 3px 0 1px; }
    .props .combo { padding-right: 2px; }
    .props .swatch { margin: 0 11px 0 9px; width: 20px; height: 20px; border-color: #c9ccd1; }
    .props .rule { flex: none; width: 79px; height: 1px; background: #f2f3f4; margin-right: 3px; }
    .sel { width: 29px; height: 27px; border: 1px solid #7dbcec; background: #41607e; }
    .tabs { display: flex; align-items: flex-end; height: 33px; padding-left: 21px; flex: none; }
    .tab { position: relative; isolation: isolate; height: 28px; justify-content: flex-start; color: #b3b7bd; padding: 2px 18px 0; }
    .tab::before, .tab::after { content: ""; position: absolute; z-index: -1; top: 0; bottom: 0; background: var(--tab, #303743); }
    .tab::before { left: 0; right: 20px; transform: skewX(-18deg); border-radius: 10px 0 0 0; }
    .tab::after { right: 0; left: 20px; transform: skewX(18deg); border-radius: 0 10px 0 0; }
    .tab.start { width: 160px; }
    .tab.doc1 { --tab: #3b4453; width: 186px; color: #f2f3f4; padding: 2px 11px 0; gap: 12px; z-index: 1; }
    .plus { width: 26px; height: 18px; margin: 0 0 4px 10px; border-radius: 4px 10px 4px 10px; background: #303743; color: #b3b7bd; }
    .strip { height: 5px; background: #3b4453; flex: none; }
    .canvas { position: relative; flex: 1; min-height: 0; background: #222830; border-bottom: 1px solid #4b515b; }
    .sheet, .over { position: absolute; left: 0; top: 0; width: 100%; height: 100%; }
    .over { z-index: 3; pointer-events: none; }
    .sheet text, .over text { font-family: "Liberation Sans", Arial, sans-serif; font-size: 16px; fill: #fff; }
    .sheet .heading { font-size: 33px; }
    .sheet .axis { font-family: Lato, "Liberation Sans", sans-serif; font-weight: 300; font-size: 22px; fill: #e6e8ea; }
    .viewlabel { position: absolute; left: 3px; top: 6px; color: #f2f3f4; font-size: 14px; }
    .viewwins { position: absolute; right: 13px; top: 11px; display: flex; align-items: center; gap: 12px; }
    .cube { position: absolute; right: 16px; top: 42px; width: 144px; }
    .cube svg { display: block; }
    .cube text { font-family: "Liberation Sans", Arial, sans-serif; font-weight: 700; font-size: 22px; fill: #b9bcc0; text-anchor: middle; }
    .cube .top { font-size: 13px; fill: #50565c; font-family: "Open Sans", sans-serif; }
    .wcs { width: 57px; height: 21px; margin: 18px 0 0 43px; gap: 7px; border-radius: 5px; background: #9a9dab; border: 1px solid #aeb1bd; color: #4a4e59; font: 13px "Liberation Sans", Arial, sans-serif; }
    .nav { position: absolute; right: 3px; top: 262px; width: 40px; border-radius: 4px; background: #575c60; }
    .cmd { position: absolute; left: 0; right: 0; bottom: 0; display: flex; justify-content: center; }
    .cmdbox { display: flex; width: 688px; height: 33px; background: #282e39; }
    .handle { display: flex; align-items: center; gap: 8px; width: 70px; padding-left: 5px; }
    .wrench { margin-left: 5px; }
    .prompt { display: flex; align-items: center; flex: 1; height: 32px; padding: 0 6px 0 5px; gap: 4px; background: #c0c1c2; border-radius: 2px; }
    .prompt input { flex: 1; min-width: 0; margin-left: 3px; font: italic 15px "DejaVu Sans Mono", monospace; color: #4a4d52; outline: none; }
    .prompt input::placeholder { color: #75777a; opacity: 1; }
    .lower { display: flex; flex-direction: column; flex: none; height: 58px; background: #232a34; }
    .layouts { display: flex; height: 22px; padding-left: 14px; align-items: flex-start; }
    .ltab { position: relative; isolation: isolate; height: 22px; padding: 0 15px; color: #b3b7bd; }
    .ltab::before, .ltab::after { content: ""; position: absolute; z-index: -1; top: 0; bottom: 0; background: #303743; }
    .ltab::before { left: 4px; right: 20px; transform: skewX(14deg); border-radius: 0 0 0 8px; }
    .ltab::after { right: 4px; left: 20px; transform: skewX(-14deg); border-radius: 0 0 8px 0; }
    .ltab.on { color: #fff; font-weight: 700; }
    .ltab.on::before, .ltab.on::after { background: #3b4453; }
    .layouts .plus { margin: 2px 0 0 6px; border-radius: 10px 4px 10px 4px; }
    .status { display: flex; justify-content: flex-end; gap: 3px; margin-top: 4px; height: 30px; color: #f2f3f4; }
    .seg { display: flex; background: #3b4453; }
    .seg button { width: 30px; height: 30px; }
    .seg button.on { background: #5f8fc4; border: 1px solid #3b4453; }
    .seg .nar { width: 20px; }
    .seg .model { width: 59px; }
    .seg .ratio { width: 43px; gap: 5px; }
    .task { display: flex; flex: none; height: 8px; padding-left: 60px; background: linear-gradient(90deg, #0b2a47, #0d3154 60%, #17365a 80%, #0b2a47); }
    .task .win { width: 360px; background: #36546f; border: 1px solid #5d7b96; border-bottom: 0; }
    .task .live { width: 61px; margin-left: 684px; background: #1d5a97; }
    .mark { position: absolute; left: 50%; bottom: 18px; width: 232px; margin-left: -116px; z-index: 2; opacity: .475; pointer-events: none; }
    .mark svg { display: block; }
    .mark text { font: 700 37px "Liberation Sans", Arial, sans-serif; fill: #a6a6a8; }
    .peek { position: absolute; left: 806px; top: 0; width: 310px; height: 1px; background: linear-gradient(90deg, #14181e 123px, #2f6ea3 123px, #2f6ea3 183px, #14181e 183px); }
  `;

  private big(label: string, icon: TemplateResult, width: string, arrow = false) {
    return html`<button class="big ${width}">${icon}<span class="cap">${label}</span>${arrow ? html`<span class="arrow">${caret(6, 4)}</span>` : ""}</button>`;
  }

  private small(label: string, icon: TemplateResult) {
    return html`<button aria-label=${label}>${icon}</button>`;
  }

  private head(label: string, arrow = true) {
    return html`<h2>${label}${arrow ? caret(10, 5) : ""}</h2>`;
  }

  private header() {
    const quick: Cmd[] = [
      ["New", icons.neu], ["Open", icons.open], ["Save", icons.save], ["Save As", icons.saveAs],
      ["Open from Web", icons.mobOpen], ["Save to Web", icons.mobSave], ["Plot", icons.print], ["Undo", icons.undo],
    ];
    const tabs = ["Home", "Insert", "Annotate", "Parametric", "View", "Manage", "Output", "Add-ins", "Collaborate", "Express Tools", "Featured Apps"];
    return html`<header>
      <button class="logo" aria-label="Application menu">${icons.logo}</button>
      <div class="titlebar">
        <div class="qat">${quick.map(([l, i]) => this.small(l, i))}
          <button class="arrow" aria-label="Undo list">${caret(6, 4)}</button>${this.small("Redo", icons.redo)}
          <button class="arrow" aria-label="Redo list">${caret(6, 4)}</button><button class="more" aria-label="Customize">${icons.qat}</button>
        </div>
        <h1 class="doc"><span>Autodesk AutoCAD 2021</span><span>Residential building.dwg</span></h1>
        <div class="tools">
          ${ico(5, 10, svg`<path d="M0 0L5 5L0 10Z" fill=${W}/>`)}
          <input class="search" aria-label="Search help" placeholder="Type a keyword or phrase" />
          ${this.small("Search", icons.search)}
          <button class="sign">${icons.person}Sign In</button>${caret(6, 4)}
          <button class="cartbtn" aria-label="App Store">${icons.cart}</button>
          <button class="appbtn" aria-label="Autodesk App">${icons.appA}${caret(6, 4)}</button>
          <button class="help" aria-label="Help"><span class="q">?</span>${caret(6, 4)}</button>
          <div class="wins">
            ${this.small("Minimize", ico(10, 16, svg`<path d="M0 14H10" stroke=${W} stroke-width="3"/>`))}
            ${this.small("Restore", ico(16, 16, svg`<path d="M5 5V1H15V10H12M1 6H11V15H1Z" stroke=${W} stroke-width="2"/>`))}
            ${this.small("Close", ico(14, 14, svg`<path d="M1 1L13 13M13 1L1 13" stroke=${W} stroke-width="2"/>`))}
          </div>
        </div>
      </div>
      <nav class="menu">${tabs.map((t) => html`<button class=${classMap({ on: t === this.ribbonTab })} @click=${() => (this.ribbonTab = t)}>${t}</button>`)}
        <button class="mini" aria-label="Minimize ribbon">${ico(19, 10, svg`<rect width="19" height="10" fill="#eceded"/><path d="M6 7L9.500 3L13 7Z" fill="#444"/>`)}${caret(6, 4)}</button>
      </nav>
    </header>`;
  }

  private ribbon() {
    const mod: Cmd[] = [
      ["Move", icons.move], ["Rotate", icons.rotate], ["Trim", icons.trim, true], ["", icons.erase],
      ["Copy", icons.copy], ["Mirror", icons.mirror], ["Fillet", icons.fillet, true], ["", icons.explode],
      ["Stretch", icons.stretch], ["Scale", icons.scale], ["Array", icons.array, true], ["", icons.offset],
    ];
    const modAria = ["Erase", "Explode", "Offset"];
    return html`<section class="ribbon">
      <div class="panel"><div class="body">
        ${this.big("Line", icons.line, "w52")}${this.big("Polyline", icons.pline, "w56")}${this.big("Circle", icons.circle, "w66", true)}${this.big("Arc", icons.arc, "w52", true)}
        <div class="col"><button class="withcaret" aria-label="Rectangle">${icons.rect}${caret(6, 4)}</button><button class="withcaret" aria-label="Ellipse">${icons.ellipse}${caret(6, 4)}</button><button class="withcaret" aria-label="Hatch">${icons.hatch}${caret(6, 4)}</button></div>
      </div>${this.head("Draw")}</div>
      <div class="panel"><div class="body"><div class="mod">
        ${mod.map(([l, i, a], n) => html`<button aria-label=${l || modAria[(n - 3) / 4]}>${i}${l}${a ? html`<span class="arrow">${caret(6, 4)}</span>` : ""}</button>`)}
      </div></div>${this.head("Modify")}</div>
      <div class="panel"><div class="body">
        ${this.big("Text", icons.text, "w60", true)}${this.big("Dimension", icons.dim, "w70")}
        <div class="col anno"><button class="withcaret" aria-label="Linear">${icons.dimLin}${caret(6, 4)}</button><button class="withcaret" aria-label="Leader">${icons.leader}${caret(6, 4)}</button><button>${icons.table}Table</button></div>
      </div>${this.head("Annotation")}</div>
      <div class="panel"><div class="body">
        ${this.big("Layer\nProperties", icons.layerProps, "w76")}
        <div class="layers">
          <label class="combo">${icons.bulb}${icons.sun}${icons.lock}<span class="swatch"></span><select aria-label="Layer"><option>wall</option></select>${caret(10, 6)}</label>
          <div class="lrow">${this.small("Off", icons.lOff)}${this.small("Isolate", icons.lIso)}${this.small("Freeze", icons.lFrz)}${this.small("Lock", icons.lLock)}<button class="lbl">${icons.lCur}Make Current</button></div>
          <div class="lrow">${this.small("Turn All On", icons.lOn)}${this.small("Unisolate", icons.lUniso)}${this.small("Thaw All", icons.lThaw)}${this.small("Unlock", icons.lUnlock)}<button class="lbl">${icons.lMatch}Match Layer</button></div>
        </div>
      </div>${this.head("Layers")}</div>
      <div class="panel"><div class="body">
        ${this.big("Insert", icons.insert, "w52", true)}
        <div class="col">${this.small("Create Block", icons.bNew)}${this.small("Edit Block", icons.bEdit)}<button class="withcaret" aria-label="Edit Attributes">${icons.bAttr}${caret(6, 4)}</button></div>
      </div>${this.head("Block")}</div>
      <div class="panel"><div class="body">
        ${this.big("Match\nProperties", icons.match, "w76")}
        <div class="props">
          ${icons.wheel}<label class="combo"><span class="swatch"></span><select aria-label="Object color"><option>ByLayer</option></select>${caret(9, 6)}</label>
          ${icons.weights}<label class="combo"><span class="rule"></span><select aria-label="Lineweight"><option>ByLayer</option></select>${caret(9, 6)}</label>
          ${icons.ltypes}<label class="combo"><span class="rule"></span><select aria-label="Linetype"><option>ByLayer</option></select>${caret(9, 6)}</label>
        </div>
      </div><h2 class="wide"><span class="name">Properties${caret(10, 5)}</span>${icons.launch}</h2></div>
      <div class="panel"><div class="body">
        ${this.big("Group", icons.group, "w52")}
        <div class="col">${this.small("Ungroup", icons.ungroup)}${this.small("Group Edit", icons.gEdit)}<button class="sel" aria-label="Group Selection">${icons.gSel}</button></div>
      </div>${this.head("Groups")}</div>
      <div class="panel"><div class="body">
        ${this.big("Measure", icons.measure, "w88", true)}
        <div class="col">${this.small("Quick Select", icons.qsel)}${this.small("Select All", icons.selAll)}${this.small("Calculator", icons.calc)}</div>
      </div>${this.head("Utilities")}</div>
      <div class="panel"><div class="body">
        ${this.big("Paste", icons.paste, "w66", true)}
        <div class="col">${this.small("Cut", icons.cut)}${this.small("Copy Clip", icons.copyClip)}</div>
      </div>${this.head("Clipboard", false)}</div>
      <div class="panel"><div class="body">
        ${this.big("Base", icons.base, "w76", true)}
      </div><h2>View${caret(10, 5)}<span class="launch">${icons.launch}</span></h2></div>
    </section>`;
  }

  private cube() {
    return html`<div class="cube">
      <svg width="144" height="150" viewBox="0 0 144 150" role="img" aria-label="View cube">
        <ellipse cx="72" cy="75" rx="57" ry="58" fill="none" stroke="#414850" stroke-width="14"/>
        <rect x="44" y="47" width="56" height="56" rx="1" fill="#b3b4b5"/><rect x="55" y="58" width="34" height="34" fill="#a3a9ad"/>
        <text class="top" x="72" y="80">TOP</text>
        <text x="72" y="24">N</text><text x="72" y="144">S</text><text x="12" y="83">W</text><text x="132" y="83">E</text>
      </svg>
      <button class="wcs">WCS${ico(9, 5, svg`<path d="M0 0H9L4 5Z" fill="#c8cad2"/>`)}</button>
    </div>`;
  }

  private nav() {
    const s = "#3f434c";
    return html`<div class="nav">${ico(40, 259, svg`<g transform="scale(1 1.033)"><g stroke=${s} stroke-width="2">
      <circle cx="33" cy="6" r="4" stroke-width="1"/><path d="M31 4L35 8M35 4L31 8" stroke-width="1"/>
      <path d="M20 21H33V34A13 13 0 1 1 20 21Z"/><circle cx="20" cy="34" r="7"/><path d="M15 39L10 43M25 39L30 43"/>
      <path d="M14 97L6 88Q5 84 9 86L14 90L12 77Q14 73 16 77L18 86V73Q20 69 22 73L23 86L26 74Q29 71 30 76L28 88L31 82Q34 80 33 85L27 98Z" fill="#4f535c" stroke-width="1"/>
      <path d="M6 106L24 124M24 106L6 124"/><circle cx="25" cy="122" r="6" fill="#575c60"/><path d="M29 127L34 132" stroke-width="4"/>
      <path d="M17 176V158H14L19 151L24 158H22V176Z" stroke-width="1"/><path d="M16 162Q6 162 6 166Q8 171 20 171Q33 170 33 166Q32 162 23 162"/>
      <g stroke-width="1"><rect x="6" y="201" width="8" height="8"/><rect x="16" y="201" width="8" height="8"/><rect x="26" y="201" width="8" height="8"/></g><rect x="6" y="213" width="19" height="15"/>
      <circle cx="33" cy="244" r="4" stroke-width="1"/><path d="M31 244H35" stroke-width="1"/></g>
      <path d="M17 57H23L20 61ZM17 141H23L20 145ZM17 187H23L20 191ZM12 216V225L19 220ZM5 105H11L5 111ZM25 105H19L25 111ZM5 125H11L5 119ZM9 171L14 167V175Z" fill=${s}/>
      <path d="M3 66H37M3 196H37" stroke="#62676b"/></g>`)}</div>`;
  }

  private canvas() {
    return html`<main class="canvas">
      <svg class="sheet" fill="none" role="img" aria-label="Typical floor plan">
        ${plan()}
        <g transform="translate(0 -214)">
          ${notes.map(([x, y, t]) => svg`<text x=${x} y=${y}>${t}</text>`)}
          <text class="heading" x="1169" y="756">Typical floor</text>
          <path d="M1415 873.500H1460M1467 873.500H1512M1463.500 825V870M1463.500 877V922M1460.500 870.500H1466.500V876.500H1460.500Z" stroke="#e6e8ea"/>
          <path d="M19.500 888V950.500H82M14.500 944.500H25.500V955.500H14.500Z" stroke="#e6e8ea"/>
          <text class="axis" x="22" y="884">Y</text><text class="axis" x="86" y="949">X</text>
        </g>
      </svg>
      <span class="viewlabel">[−][Top][2D Wireframe]</span>
      <div class="viewwins">
        ${this.small("Minimize view", ico(13, 12, svg`<path d="M0 9H13" stroke="#fff" stroke-width="3"/>`))}
        ${this.small("Restore view", ico(13, 12, svg`<path d="M1 4H9V11H1ZM4 4V1H12V8H9" stroke="#fff" stroke-width="2"/>`))}
        ${this.small("Close view", ico(11, 11, svg`<path d="M1 1L10 10M10 1L1 10" stroke="#fff" stroke-width="3"/>`))}
      </div>
      ${this.cube()}${this.nav()}
      <div class="cmd"><div class="cmdbox">
        <div class="handle">
          ${ico(6, 22, svg`<path d="M1 0V22M5 0V22" stroke=${G} stroke-width="2" stroke-dasharray="2 2"/>`)}
          ${this.small("Close command line", ico(12, 12, svg`<path d="M1 1L11 11M11 1L1 11" stroke=${G} stroke-width="2"/>`))}
          <button class="wrench" aria-label="Customize">${ico(20, 20, svg`<path d="M2 18L12 8" stroke=${G} stroke-width="3" stroke-linecap="round"/><path d="M19 5L15 8L12 5L15 1Q9 0 9 7L13 11Q20 11 19 5Z" fill=${G}/>`)}</button>
        </div>
        <div class="prompt">
          ${ico(20, 17, svg`<rect x="1" y="1" width="18" height="15" stroke="#6a6c6f"/><rect x="1" y="1" width="18" height="4" fill="#6a6c6f"/><path d="M3 7L6 10L3 13M8 13H12" stroke="#4a4d52"/>`)}
          ${ico(9, 6, svg`<path d="M0 0H9L4 6Z" fill="#4a4d52"/>`)}
          <input aria-label="Command" placeholder="Type a command" />
          ${ico(8, 5, svg`<path d="M0 5H8L4 0Z" fill="#4a4d52"/>`)}
        </div>
      </div></div>
      <svg class="over"><g transform="translate(0 -214)"><text x="756" y="932">Unit 1-2 = 155.70 m2</text><text x="756" y="958">Unit 3-4 = 148.50 m2</text></g></svg>
    </main>`;
  }

  private status() {
    const s = (n: string, body: SVGTemplateResult, on = false) => html`<button class=${classMap({ on })} aria-label=${n}>${ico(20, 20, body)}</button>`;
    const more = html`<button class="nar" aria-label="More">${caret(9, 6)}</button>`;
    const person = (fill: string) => svg`<path d="M10 1L13 10L18 19L11 16V12H9V16L2 19L7 10Z" fill=${fill}/>`;
    return html`<div class="lower">
      <div class="layouts">
        ${["Model", "Layout1", "Layout2"].map((l) => html`<button class=${classMap({ ltab: true, on: l === this.layout })} @click=${() => (this.layout = l)}>${l}</button>`)}
        <button class="plus" aria-label="New layout">${ico(10, 10, svg`<path d="M5 0V10M0 5H10" stroke="#b3b7bd" stroke-width="2"/>`)}</button>
      </div>
      <div class="status">
        <div class="seg"><button class="model">MODEL</button></div>
        <div class="seg">${s("Grid", svg`<path d="M5.500 1V19M10.500 1V19M15.500 1V19M1 5.500H19M1 10.500H19M1 15.500H19" stroke=${W}/>`)}${s("Snap", svg`<path d="M3 4H18M3 10H18M3 16H18" stroke=${W} stroke-width="3" stroke-dasharray="3 3"/>`)}${more}</div>
        <div class="seg">${s("Ortho", svg`<path d="M1 0V18H20" stroke="#fff" stroke-width="2"/><path d="M2 12.500H6.500V17" stroke="#fff"/>`, true)}${s("Polar", svg`<circle cx="9" cy="11" r="8" stroke=${G}/><path d="M9 11H20M9 11L16 3M14 6V15" stroke=${G}/>`)}${more}${s("Isometric", svg`<path d="M10 0V20" stroke="#58a884"/><path d="M2 2L18 18" stroke="#b8505a"/><rect x="8" y="8" width="4" height="4" stroke=${W}/>`)}${more}
          ${s("Tracking", svg`<path d="M18 1L1 18H20" stroke="#fff"/><rect x="7" y="8" width="4" height="4" fill="#fff"/>`, true)}${s("Object Snap", svg`<path d="M4 3.500H18.500V18.500H3.500V5" stroke="#fff"/><rect x="1.500" y="1.500" width="5" height="5" fill="#5f8fc4" stroke="#fff"/>`, true)}${more}</div>
        <div class="seg">${s("Annotation visibility", svg`${person("#fff")}<circle cx="17" cy="4" r="2" stroke="#fff"/>`, true)}${s("Auto scale", svg`${person(W)}<path d="M18 0L14 5H18L15 9" stroke=${W}/>`)}${s("Annotation scale", person(W))}<button class="ratio">1:1${caret(9, 6)}</button></div>
        <div class="seg">${s("Workspace", svg`<circle cx="10" cy="10" r="5" stroke=${W} stroke-width="4"/><circle cx="10" cy="10" r="8" stroke=${W} stroke-width="4" stroke-dasharray="3 3"/>`)}${more}</div>
        <div class="seg">${s("Monitor", svg`<path d="M10 1V19M1 10H19" stroke=${W} stroke-width="2"/>`)}</div>
        <div class="seg">${s("Isolate", svg`<rect x="1" y="1" width="7" height="8" stroke=${G}/><circle cx="15" cy="9" r="4" stroke=${G}/><path d="M8 12L12 19H4Z" stroke=${G}/>`)}</div>
        <div class="seg">${ico(34, 30, svg`<path d="M6 3H20L24 8V20H6Z" fill="#3b7ac0"/><path d="M10 3V14M5 8H16" stroke="#fff" stroke-width="2"/><path d="M5 17H15V26H5Z" fill="#e9b53c"/><path d="M14 20L19 25L28 14" stroke="#5db35f" stroke-width="4"/>`)}</div>
        <div class="seg">${s("Clean screen", svg`<rect x="1" y="2" width="18" height="15" stroke=${G}/><path d="M12 9L16 5M4 14L8 10" stroke="#fff"/><path d="M13 4H17V8ZM3 11V15H7Z" fill="#fff"/>`)}${s("Customization", svg`<path d="M0 3H20M0 10H20M0 17H20" stroke=${W} stroke-width="3"/>`)}</div>
      </div>
    </div>`;
  }

  render() {
    return html`
      ${this.header()}${this.ribbon()}
      <div class="tabs">
        <button class="tab start">Start</button>
        <button class="tab doc1">Residential building* ${ico(11, 11, svg`<path d="M1 1L10 10M10 1L1 10" stroke="#b3b7bd" stroke-width="2"/>`)}</button>
        <button class="plus" aria-label="New drawing">${ico(10, 10, svg`<path d="M5 0V10M0 5H10" stroke="#b3b7bd" stroke-width="2"/>`)}</button>
      </div>
      <div class="strip"></div>
      ${this.canvas()}${this.status()}
      <footer class="task"><span class="win"></span><span class="live"></span></footer>
      <div class="mark"><svg width="232" height="110" viewBox="0 0 232 110">
        <g fill="#a6a6a8"><rect x="34" y="1" width="11" height="54" rx="5"/><circle cx="69" cy="8" r="7"/><circle cx="86" cy="8" r="7"/><circle cx="110" cy="22" r="7"/><circle cx="127" cy="22" r="7"/></g>
        <g fill="none" stroke="#a6a6a8" stroke-width="14"><path d="M33 35A15 15 0 1 0 37 53"/><circle cx="208" cy="46" r="15"/><path d="M61 52A16 16 0 0 1 93 52"/></g>
        <text x="0" y="99">mostaql.com</text></svg></div>
      <span class="peek"></span>`;
  }
}
